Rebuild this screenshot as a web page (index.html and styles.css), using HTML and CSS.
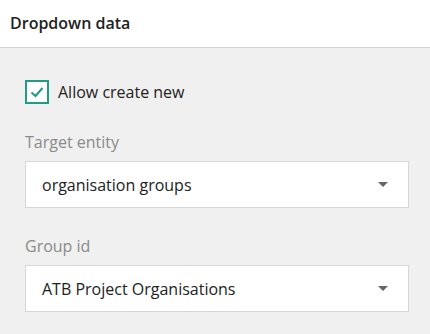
FILE: index.html
```html
<!DOCTYPE html>
<html lang="en">
<head>
    <meta charset="UTF-8">
    <meta name="viewport" content="width=device-width, initial-scale=1.0">
    <title>Dropdown data</title>
    <link rel="stylesheet" href="styles.css">
</head>
<body>
    <div class="panel-header">Dropdown data</div>

    <div class="panel-body">
        <label class="check-row">
            <span class="check-box">
                <svg width="14" height="12" viewBox="0 0 14 12"><path d="M1.5 6.5 L5.5 10 L12.5 2" fill="none" stroke="#1e9c87" stroke-width="2"/></svg>
            </span>
            Allow create new
        </label>

        <div class="field">
            <div class="field-label">Target entity</div>
            <div class="select-box">
                <span>organisation groups</span>
                <span class="caret"></span>
            </div>
        </div>

        <div class="field">
            <div class="field-label">Group id</div>
            <div class="select-box">
                <span>ATB Project Organisations</span>
                <span class="caret"></span>
            </div>
        </div>
    </div>
</body>
</html>
```

FILE: styles.css
```css
body {
    margin: 0;
    background-color: #f0f0f0;
    font-family: "Open Sans", Arial, sans-serif;
    color: #222;
}
.panel-header {
    background-color: white;
    height: 48px;
    box-sizing: border-box;
    padding: 0 10px;
    line-height: 46px;
    font-size: 16px;
    font-weight: 600;
    border-bottom: 1px solid #d4d4d4;
}
.panel-body {
    padding: 32px 21px 0 25px;
}
.check-row {
    display: flex;
    align-items: center;
    gap: 9px;
    font-size: 16px;
    color: #222;
}
.check-box {
    width: 20px;
    height: 20px;
    border: 2px solid #1e9c87;
    background-color: white;
    display: flex;
    align-items: center;
    justify-content: center;
}
.field {
    margin-top: 27px;
}
.field-label {
    font-size: 16px;
    color: #8a8a8a;
    margin-bottom: 8px;
}
.select-box {
    height: 47px;
    box-sizing: border-box;
    background-color: white;
    border: 1px solid #d6d6d6;
    display: flex;
    align-items: center;
    justify-content: space-between;
    padding: 0 20px 0 16px;
    font-size: 16px;
    color: #222;
}
.caret {
    width: 0;
    height: 0;
    border-left: 5px solid transparent;
    border-right: 5px solid transparent;
    border-top: 5px solid #666;
}
```
